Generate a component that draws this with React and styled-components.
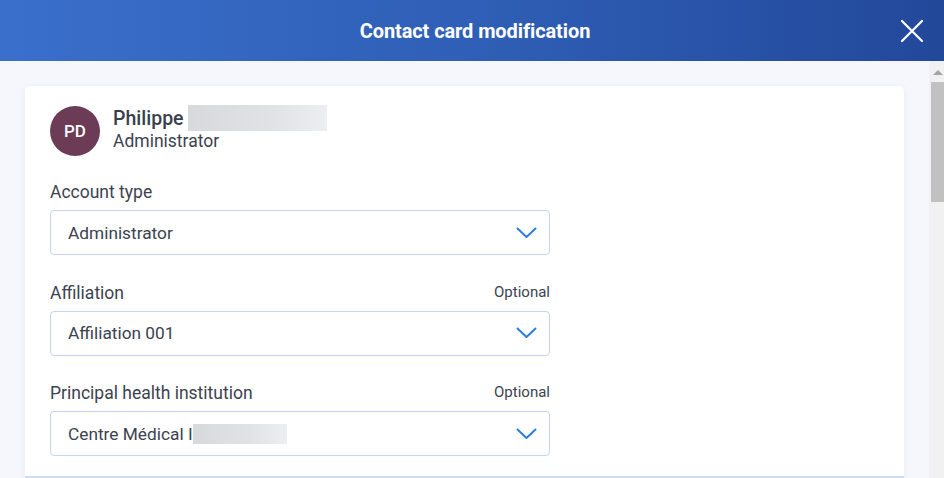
import styled, { createGlobalStyle } from "styled-components";

const Global = createGlobalStyle`
  html, body {
    margin: 0;
    height: 100%;
    overflow: hidden;
  }
  body {
    font-family: Roboto, "Liberation Sans", sans-serif;
    color: #3c4250;
  }
  #root {
    height: 100%;
  }
`;

const Modal = styled.div`
  display: flex;
  flex-direction: column;
  height: 100vh;
  background: #f5f7fc;
`;

const Header = styled.header`
  flex: 0 0 61px;
  display: flex;
  align-items: center;
  justify-content: center;
  padding-left: 6px;
  position: relative;
  background: linear-gradient(90deg, #3a6fcb 0%, #2f5fb6 50%, #22489a 100%);
`;

const Title = styled.h1`
  margin: 0;
  font-size: 20px;
  font-weight: 700;
  color: #fff;
  letter-spacing: -0.1px;
`;

const Close = styled.button`
  position: absolute;
  right: 20px;
  top: 19px;
  width: 24px;
  height: 24px;
  padding: 0;
  border: 0;
  background: none;
  cursor: pointer;
`;

const Viewport = styled.div`
  flex: 1;
  display: flex;
  min-height: 0;
`;

const Content = styled.div`
  flex: 1;
  overflow: hidden;
  padding: 25px 25px 0 25px;
`;

const Scrollbar = styled.div`
  flex: 0 0 15px;
  background: #f1f1f1;
  display: flex;
  flex-direction: column;
`;

const ScrollArrow = styled.div`
  height: 21px;
  display: flex;
  align-items: center;
  justify-content: flex-end;
  padding-right: 1px;
`;

const Thumb = styled.div`
  height: 120px;
  margin-left: 2px;
  background: #c1c1c1;
`;

const Card = styled.section`
  background: #fff;
  border-radius: 5px;
  box-shadow: 0 1px 6px rgba(60, 90, 160, 0.08);
  padding: 20px 25px 0 25px;
  min-height: 1200px;
`;

const Person = styled.div`
  display: flex;
  align-items: center;
  gap: 13px;
  margin-bottom: 26px;
`;

const Avatar = styled.div`
  width: 50px;
  height: 50px;
  border-radius: 50%;
  background: #6c3b55;
  color: #fff;
  display: flex;
  align-items: center;
  justify-content: center;
  font-size: 17px;
  font-weight: 500;
`;

const NameBlock = styled.div`
  display: flex;
  flex-direction: column;
  margin-top: -5px;
`;

const NameRow = styled.div`
  display: flex;
  align-items: center;
  gap: 4px;
`;

const Name = styled.span`
  font-size: 19.5px;
  font-weight: 500;
  color: #3a3f4d;
  line-height: 23px;
`;

const Redacted = styled.span`
  display: inline-block;
  width: ${(p) => p.$w}px;
  height: ${(p) => p.$h}px;
  background: linear-gradient(90deg, #d8d9dc 0%, #e1e2e5 60%, #eceef1 100%);
`;

const Role = styled.span`
  font-size: 17.5px;
  color: #3c4250;
  line-height: 21px;
`;

const FieldList = styled.div`
  display: flex;
  flex-direction: column;
  gap: 27.5px;
  width: 500px;
`;

const LabelRow = styled.div`
  display: flex;
  justify-content: space-between;
  align-items: baseline;
  margin-bottom: 8px;
`;

const Label = styled.label`
  font-size: 17.5px;
  color: #3c4250;
  line-height: 20px;
`;

const Optional = styled.span`
  font-size: 15px;
  color: #3c4250;
  position: relative;
  top: -2px;
`;

const Select = styled.div`
  height: 45px;
  box-sizing: border-box;
  border: 1px solid #c6d4ef;
  border-radius: 4px;
  display: flex;
  align-items: center;
  justify-content: space-between;
  padding: 0 12px 0 17px;
  font-size: 17.3px;
  color: #3c4250;
`;

const Value = styled.span`
  display: flex;
  align-items: center;
`;

const Divider = styled.div`
  height: 3px;
  background: #d0daf3;
  margin: 20px -25px 0;
`;

const Chevron = () => (
  <svg width="21" height="12" viewBox="0 0 21 12">
    <polyline
      points="1.5,1.5 10.5,10 19.5,1.5"
      fill="none"
      stroke="#2e7ce0"
      strokeWidth="2"
      strokeLinecap="round"
      strokeLinejoin="round"
    />
  </svg>
);

const fields = [
  { label: "Account type", value: "Administrator" },
  { label: "Affiliation", value: "Affiliation 001", optional: true },
  {
    label: "Principal health institution",
    value: "Centre Médical I",
    optional: true,
    redact: true,
  },
];

export default function App() {
  return (
    <>
      <Global />
      <Modal>
        <Header>
          <Title>Contact card modification</Title>
          <Close aria-label="Close">
            <svg width="24" height="24" viewBox="0 0 24 24">
              <path
                d="M2 2 L22 22 M22 2 L2 22"
                stroke="#fff"
                strokeWidth="2.2"
                strokeLinecap="round"
              />
            </svg>
          </Close>
        </Header>
        <Viewport>
          <Content>
            <Card>
              <Person>
                <Avatar>PD</Avatar>
                <NameBlock>
                  <NameRow>
                    <Name>Philippe</Name>
                    <Redacted $w={139} $h={26} />
                  </NameRow>
                  <Role>Administrator</Role>
                </NameBlock>
              </Person>
              <FieldList>
                {fields.map((f) => (
                  <div key={f.label}>
                    <LabelRow>
                      <Label>{f.label}</Label>
                      {f.optional && <Optional>Optional</Optional>}
                    </LabelRow>
                    <Select>
                      <Value>
                        {f.value}
                        {f.redact && <Redacted $w={94} $h={20} />}
                      </Value>
                      <Chevron />
                    </Select>
                  </div>
                ))}
              </FieldList>
              <Divider />
            </Card>
          </Content>
          <Scrollbar>
            <ScrollArrow>
              <svg width="10" height="6" viewBox="0 0 10 6">
                <polygon points="0,6 5,1 10,6" fill="#a3a3a3" />
              </svg>
            </ScrollArrow>
            <Thumb />
          </Scrollbar>
        </Viewport>
      </Modal>
    </>
  );
}
